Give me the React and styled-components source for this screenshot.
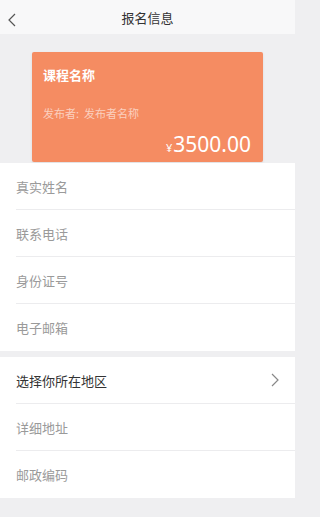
import React from "react";
import styled, { createGlobalStyle } from "styled-components";

const GlobalStyle = createGlobalStyle`
  html, body {
    margin: 0;
    padding: 0;
    background: #efeff1;
    font-family: "Noto Sans", "Noto Sans CJK SC", sans-serif;
  }
`;

const Page = styled.div`
  width: 295px;
  min-height: 517px;
  background-color: #efeff1;
`;

const Header = styled.div`
  position: relative;
  height: 34px;
  display: flex;
  align-items: center;
  justify-content: center;
  background-color: #f8f8f9;
`;

const BackButton = styled.div`
  position: absolute;
  left: 8px;
  top: 10px;
  width: 10px;
  height: 14px;
`;

const Title = styled.div`
  font-size: 13px;
  color: #333;
  font-family: "Noto Sans CJK SC", sans-serif;
`;

const Banner = styled.div`
  padding: 18px 0 1px;
`;

const CourseCard = styled.div`
  margin: 0 auto;
  width: 231px;
  height: 110px;
  box-sizing: border-box;
  padding: 13px 12px 0 11px;
  border-radius: 2px;
  background-color: #f58c62;
  box-shadow: 0 1px 3px rgba(0, 0, 0, 0.08);
  color: #fff;
  font-family: "Noto Sans CJK SC", sans-serif;
  display: flex;
  flex-direction: column;
`;

const CourseName = styled.div`
  font-size: 13px;
  font-weight: bold;
  line-height: 20px;
`;

const Publisher = styled.div`
  margin-top: 20px;
  font-size: 11px;
  line-height: 16px;
  color: rgba(255, 255, 255, 0.6);
`;

const Price = styled.div`
  margin-top: 9px;
  text-align: right;
  font-family: "Noto Sans", sans-serif;
  font-size: 21px;
  line-height: 28px;
  span {
    font-size: 11px;
    margin-right: 1px;
  }
`;

const Section = styled.div`
  background-color: #fff;
  margin-bottom: ${(p) => (p.$gap ? "6px" : "0")};
`;

const Row = styled.div`
  height: 47px;
  box-sizing: border-box;
  margin-left: 16px;
  padding-right: 16px;
  display: flex;
  align-items: center;
  justify-content: space-between;
  border-bottom: ${(p) => (p.$last ? "none" : "1px solid #ececee")};
`;

const Label = styled.div`
  font-size: 13px;
  color: ${(p) => (p.$dark ? "#333" : "#9a9a9a")};
  font-family: "Noto Sans CJK SC", sans-serif;
`;

const Chevron = ({ color = "#888", flip }) => (
  <svg
    width="8"
    height="14"
    viewBox="0 0 8 14"
    style={flip ? { transform: "scaleX(-1)" } : undefined}
  >
    <path d="M1 1 L7 7 L1 13" fill="none" stroke={color} strokeWidth="1.2" />
  </svg>
);

const firstFields = ["真实姓名", "联系电话", "身份证号", "电子邮箱"];
const secondFields = ["详细地址", "邮政编码"];

export default function App() {
  return (
    <Page>
      <GlobalStyle />
      <Header>
        <BackButton>
          <Chevron color="#555" flip />
        </BackButton>
        <Title>报名信息</Title>
      </Header>
      <Banner>
        <CourseCard>
          <CourseName>课程名称</CourseName>
          <Publisher>发布者: &nbsp;发布者名称</Publisher>
          <Price>
            <span>¥</span>3500.00
          </Price>
        </CourseCard>
      </Banner>
      <Section $gap>
        {firstFields.map((f, i) => (
          <Row key={f} $last={i === firstFields.length - 1}>
            <Label>{f}</Label>
          </Row>
        ))}
      </Section>
      <Section>
        <Row>
          <Label $dark>选择你所在地区</Label>
          <Chevron />
        </Row>
        {secondFields.map((f, i) => (
          <Row key={f} $last={i === secondFields.length - 1}>
            <Label>{f}</Label>
          </Row>
        ))}
      </Section>
    </Page>
  );
}
